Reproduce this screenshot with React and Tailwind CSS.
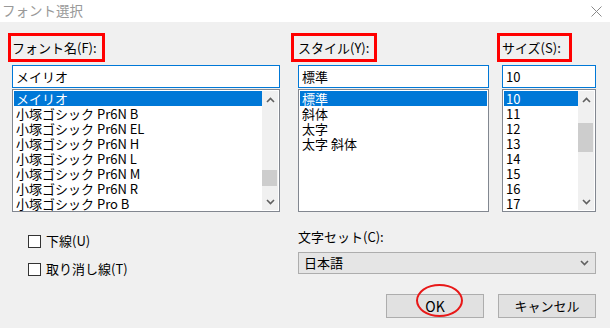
import React from 'react';

const fontItems = [
  'メイリオ',
  '小塚ゴシック Pr6N B',
  '小塚ゴシック Pr6N EL',
  '小塚ゴシック Pr6N H',
  '小塚ゴシック Pr6N L',
  '小塚ゴシック Pr6N M',
  '小塚ゴシック Pr6N R',
  '小塚ゴシック Pro B',
];
const styleItems = ['標準', '斜体', '太字', '太字 斜体'];
const sizeItems = ['10', '11', '12', '13', '14', '15', '16', '17'];

// small chevron used in scrollbars and the combo box
function Caret({ up = false, className = '' }) {
  return (
    <svg width="9" height="6" viewBox="0 0 9 6" className={className}>
      <path
        d={up ? 'M1 5 L4.5 1.5 L8 5' : 'M1 1 L4.5 4.5 L8 1'}
        fill="none"
        stroke="currentColor"
        strokeWidth="1.6"
      />
    </svg>
  );
}

function ScrollBar({ thumbTop, thumbHeight }) {
  return (
    <div className="relative w-[16px] h-full bg-[#f0f0f0] flex flex-col justify-between items-center text-[#606060]">
      <div className="h-[17px] flex items-center justify-center">
        <Caret up />
      </div>
      <div
        className="absolute left-0 w-[15px] bg-[#cdcdcd]"
        style={{ top: thumbTop, height: thumbHeight }}
      />
      <div className="h-[17px] flex items-center justify-center">
        <Caret />
      </div>
    </div>
  );
}

function ListBox({ items, width, scroll }) {
  return (
    <div
      className="mt-[1px] h-[123px] border border-[#828790] bg-white p-[1px] flex overflow-hidden"
      style={{ width }}
    >
      <div className="flex-1 flex flex-col">
        {items.map((it, i) => (
          <div
            key={it}
            className={
              'h-[15px] leading-[15px] pl-[2px] whitespace-nowrap ' +
              (i === 0 ? 'bg-[#0078d7] text-white' : 'text-black')
            }
          >
            {it}
          </div>
        ))}
      </div>
      {scroll && <ScrollBar thumbTop={scroll.top} thumbHeight={scroll.height} />}
    </div>
  );
}

function Field({ label, labelBox, value, width, items, scroll }) {
  return (
    <div className="flex flex-col" style={{ width }}>
      <div
        className="h-[29px] border-[3px] border-[#ff0000] flex items-center pl-[1px]"
        style={{ width: labelBox.w, marginLeft: labelBox.ml }}
      >
        <span style={{ marginLeft: -labelBox.ml - 4 }}>{label}</span>
      </div>
      <div className="mt-[3px] h-[23px] border border-[#0078d7] bg-white flex items-center pl-[3px]">
        {value}
      </div>
      <ListBox items={items} width={width} scroll={scroll} />
    </div>
  );
}

function CheckRow({ label }) {
  return (
    <div className="flex items-center gap-[5px] h-[14px]">
      <div className="w-[13px] h-[13px] border border-[#333333] bg-white" />
      <span>{label}</span>
    </div>
  );
}

export default function App() {
  return (
    <div
      className="w-[610px] h-[328px] bg-[#f0f0f0] text-[13px] text-black overflow-hidden"
      style={{ fontFamily: '"Noto Sans CJK JP", "Noto Sans", sans-serif' }}
    >
      {/* title bar */}
      <div className="h-[22px] bg-white flex items-center justify-between pl-[2px] pr-[8px]">
        <span className="text-[#999999] text-[13.5px] leading-none">フォント選択</span>
        <svg width="11" height="11" viewBox="0 0 11 11" className="text-[#8a8a8a]">
          <path d="M0.5 0.5 L10.5 10.5 M10.5 0.5 L0.5 10.5" stroke="currentColor" strokeWidth="1" />
        </svg>
      </div>

      {/* upper columns */}
      <div className="flex pt-[11px] pl-[12px]">
        <Field
          label="フォント名(F):"
          labelBox={{ w: 97, ml: -4 }}
          value="メイリオ"
          width={268}
          items={fontItems}
          scroll={{ top: 79, height: 16 }}
        />
        <div className="ml-[18px]">
          <Field
            label="スタイル(Y):"
            labelBox={{ w: 86, ml: -7 }}
            value="標準"
            width={191}
            items={styleItems}
          />
        </div>
        <div className="ml-[13px]">
          <Field
            label="サイズ(S):"
            labelBox={{ w: 75, ml: -5 }}
            value="10"
            width={94}
            items={sizeItems}
            scroll={{ top: 32, height: 29 }}
          />
        </div>
      </div>

      {/* lower area */}
      <div className="flex">
        <div className="w-[298px] pl-[28px] pt-[22px] flex flex-col gap-[14px]">
          <CheckRow label="下線(U)" />
          <CheckRow label="取り消し線(T)" />
        </div>
        <div className="w-[298px] pt-[17px] flex flex-col">
          <div className="h-[16px] leading-[16px]">文字セット(C):</div>
          <div className="mt-[7px] h-[22px] bg-[#e5e5e5] border border-[#adadad] flex items-center justify-between pl-[5px] pr-[6px]">
            <span>日本語</span>
            <Caret className="text-[#606060]" />
          </div>
          <div className="mt-[20px] flex justify-end gap-[14px]">
            <div className="relative w-[98px] h-[24px] bg-[#e1e1e1] border border-[#adadad] flex items-center justify-center text-[14px] font-normal">
              OK
              <div className="absolute left-[29px] -top-[11px] w-[47px] h-[33px] rounded-[50%] border-2 border-[#e81818]" />
            </div>
            <div className="w-[98px] h-[24px] bg-[#e1e1e1] border border-[#adadad] flex items-center justify-center">
              キャンセル
            </div>
          </div>
        </div>
      </div>
    </div>
  );
}
